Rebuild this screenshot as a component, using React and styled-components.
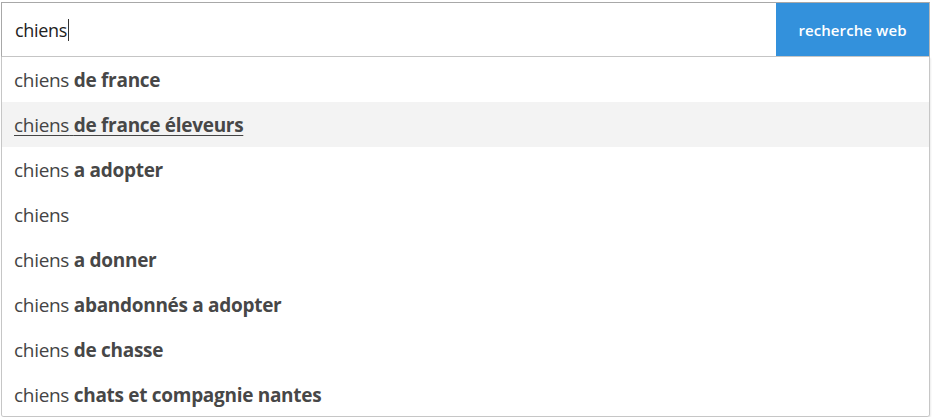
import React from "react"
import styled, { createGlobalStyle } from "styled-components"

const GlobalStyle = createGlobalStyle`
    body {
        margin: 0;
        background: #fff;
        font-family: "Open Sans", "Noto Sans", sans-serif;
    }
`

const suggestions = [
    { rest: "de france" },
    { rest: "de france éleveurs", active: true },
    { rest: "a adopter" },
    { rest: "" },
    { rest: "a donner" },
    { rest: "abandonnés a adopter" },
    { rest: "de chasse" },
    { rest: "chats et compagnie nantes" },
]

const SearchBox = () => (
    <Wrapper>
        <SearchBar>
            <QueryField>
                chiens<Caret />
            </QueryField>
            <SearchButton type="button">recherche web</SearchButton>
        </SearchBar>
        <SuggestList>
            {suggestions.map((s, i) => (
                <Suggestion key={i} $active={s.active}>
                    <span>chiens</span>
                    {s.rest && <b> {s.rest}</b>}
                </Suggestion>
            ))}
        </SuggestList>
    </Wrapper>
)

const Wrapper = styled.div`
    width: 929px;
    padding-top: 2px;
    margin-left: 1px;
`

const SearchBar = styled.div`
    display: flex;
    height: 53px;
    border: 1px solid #a8a8a8;
    border-bottom: 1px solid #c6c6c6;
    border-right: 1px solid #b8b8b8;
`

const QueryField = styled.div`
    flex: 1;
    display: flex;
    align-items: center;
    padding-left: 13px;
    font-size: 18px;
    color: #222;
    letter-spacing: -0.3px;
`

const Caret = styled.span`
    display: inline-block;
    width: 1px;
    height: 22px;
    background: #333;
    margin-left: 1px;
`

const SearchButton = styled.button`
    width: 153px;
    height: 100%;
    border: none;
    background: #3391dc;
    color: #fff;
    font-family: "Open Sans", sans-serif;
    font-size: 15px;
    font-weight: 600;
    letter-spacing: 0.1px;
    padding: 0;
`

const SuggestList = styled.ul`
    list-style: none;
    margin: 0;
    padding: 0;
    height: 359px;
    overflow: hidden;
    border: 1px solid #c6c6c6;
    border-top: none;
    border-radius: 0 0 3px 3px;
    box-shadow: 1px 1px 2px rgba(0, 0, 0, 0.08);
`

const Suggestion = styled.li`
    height: 45px;
    line-height: 46px;
    padding-left: 12px;
    font-size: 19px;
    color: #444;
    letter-spacing: -0.3px;
    background: ${p => (p.$active ? "#f3f3f3" : "#fff")};
    text-decoration: ${p => (p.$active ? "underline" : "none")};
    text-underline-offset: 3px;
    white-space: pre;
    b {
        font-weight: 700;
        color: #474747;
    }
`

export default function App() {
    return (
        <>
            <GlobalStyle />
            <SearchBox />
        </>
    )
}
